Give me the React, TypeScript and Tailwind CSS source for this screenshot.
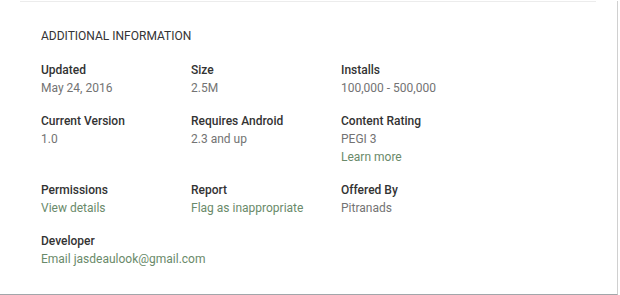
import React from 'react';

interface InfoItem {
  label: string;
  values: { text: string; link?: boolean }[];
}

const items: InfoItem[] = [
  { label: 'Updated', values: [{ text: 'May 24, 2016' }] },
  { label: 'Size', values: [{ text: '2.5M' }] },
  { label: 'Installs', values: [{ text: '100,000 - 500,000' }] },
  { label: 'Current Version', values: [{ text: '1.0' }] },
  { label: 'Requires Android', values: [{ text: '2.3 and up' }] },
  {
    label: 'Content Rating',
    values: [{ text: 'PEGI 3' }, { text: 'Learn more', link: true }],
  },
  { label: 'Permissions', values: [{ text: 'View details', link: true }] },
  { label: 'Report', values: [{ text: 'Flag as inappropriate', link: true }] },
  { label: 'Offered By', values: [{ text: 'Pitranads' }] },
  { label: 'Developer', values: [{ text: 'Email jasdeaulook@gmail.com', link: true }] },
];

const Info: React.FC<{ item: InfoItem }> = ({ item }) => (
  <div className="mb-[15px]">
    <div className="text-[12px] leading-[18px] font-medium text-[#333]">{item.label}</div>
    {item.values.map((v, i) => (
      <div
        key={i}
        className={
          v.link
            ? 'text-[12px] leading-[18px] text-[#6a8a6a] whitespace-nowrap'
            : 'text-[12px] leading-[18px] text-[#737373] whitespace-nowrap'
        }
      >
        {v.text}
      </div>
    ))}
  </div>
);

export default function App() {
  return (
    <div className="w-[620px] h-[295px] bg-white" style={{ fontFamily: 'Roboto, "Liberation Sans", sans-serif' }}>
      <div className="w-[618px] h-[294px] bg-white border-r border-b border-r-[#d0d0d0] border-b-[#a2a6aa]">
        <div className="ml-[20px] mt-px w-[576px] h-px bg-[#ececec]" />
        <div className="pl-[41px] pt-[25px]">
          <h2 className="text-[12px] leading-[18px] text-[#333] uppercase">
            Additional Information
          </h2>
          <div className="mt-[16px] grid grid-cols-[150px_150px_150px]">
            {items.map((item) => (
              <Info key={item.label} item={item} />
            ))}
          </div>
        </div>
      </div>
    </div>
  );
}
